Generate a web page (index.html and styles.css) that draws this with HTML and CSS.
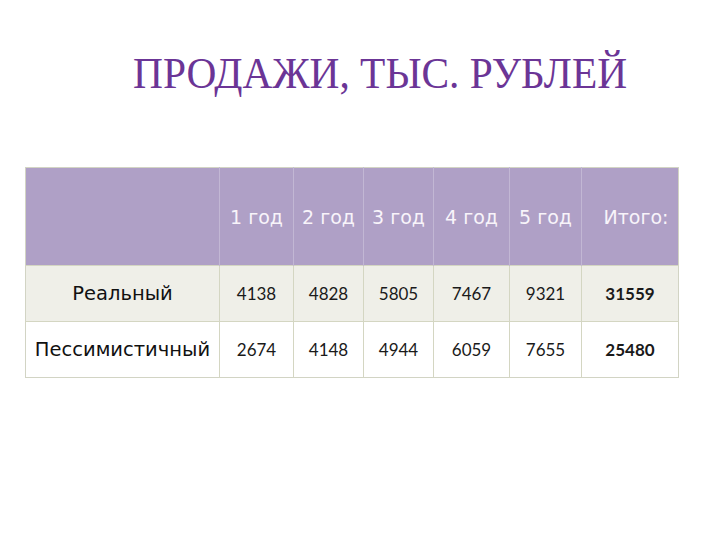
FILE: index.html
```html
<!DOCTYPE html>
<html lang="ru">
<head>
<meta charset="utf-8">
<link rel="stylesheet" href="styles.css">
</head>
<body>
<div class="slide">
  <h1 class="title">ПРОДАЖИ, ТЫС. РУБЛЕЙ</h1>
  <table class="sales">
    <colgroup>
      <col class="c-label"><col class="c1"><col class="c2"><col class="c3"><col class="c4"><col class="c5"><col class="c6">
    </colgroup>
    <thead>
      <tr><th></th><th>1 год</th><th>2 год</th><th>3 год</th><th>4 год</th><th>5 год</th><th class="total-h">Итого:</th></tr>
    </thead>
    <tbody>
      <tr class="odd"><td class="label">Реальный</td><td>4138</td><td>4828</td><td>5805</td><td>7467</td><td>9321</td><td class="total">31559</td></tr>
      <tr><td class="label">Пессимистичный</td><td>2674</td><td>4148</td><td>4944</td><td>6059</td><td>7655</td><td class="total">25480</td></tr>
    </tbody>
  </table>
</div>
</body>
</html>
```

FILE: styles.css
```css
html, body {
  margin: 0;
  padding: 0;
  background: #ffffff;
}
.slide {
  width: 720px;
  height: 540px;
  padding: 48px 0 0 25px;
  box-sizing: border-box;
}
.title {
  margin: 0 0 0 108px;
  font-family: "Liberation Serif", serif;
  font-weight: normal;
  font-size: 45px;
  line-height: 50px;
  color: #6b3596;
  height: 119px;
  white-space: nowrap;
  transform: scaleX(0.92);
  transform-origin: left top;
}
.sales {
  border-collapse: collapse;
  table-layout: fixed;
  width: 653px;
  border: 1px solid #d2d4c4;
}
.c-label { width: 194px; }
.c1 { width: 74px; }
.c2 { width: 70px; }
.c3 { width: 70px; }
.c4 { width: 76px; }
.c5 { width: 72px; }
.c6 { width: 97px; }
.sales th {
  height: 97px;
  padding: 0;
  background: #afa0c6;
  color: #f8f4fa;
  font-family: "DejaVu Sans", sans-serif;
  font-weight: normal;
  font-size: 19px;
  text-align: center;
  vertical-align: middle;
  border-left: 1px solid #c2b7d4;
}
.sales th:first-child { border-left: none; }
.sales th.total-h { padding-left: 12px; }
.sales td {
  height: 55px;
  padding: 0;
  text-align: center;
  vertical-align: middle;
  font-family: "Lato", sans-serif;
  font-size: 17px;
  color: #1a1a1a;
  border-left: 1px solid #d4d6c2;
  border-top: 1px solid #d4d6c2;
  background: #ffffff;
}
.sales tr.odd td { background: #efefe8; }
.sales td.label {
  border-left: none;
  font-family: "DejaVu Sans", sans-serif;
  font-size: 19.5px;
  color: #111111;
}
.sales td.total { font-weight: bold; }
```
